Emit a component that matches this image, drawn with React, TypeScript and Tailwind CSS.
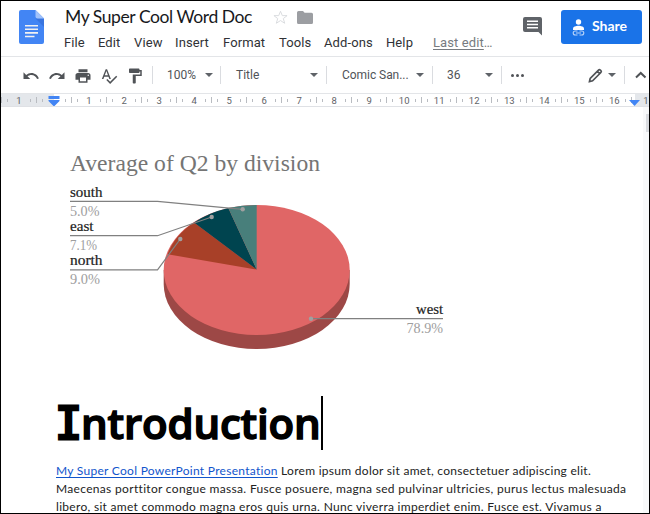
import React from "react";

const menus = ["File", "Edit", "View", "Insert", "Format", "Tools", "Add-ons", "Help"];
const menuWidths = ["w-[34px]", "w-[36px]", "w-[41px]", "w-[48px]", "w-[56px]", "w-[45px]", "w-[62px]", "w-[47px]"];
const ruler = ["1", "", "1", "2", "3", "4", "5", "6", "7", "8", "9", "10", "11", "12", "13", "14", "15", "16"];

function Caret() {
  return <svg width="8" height="4" viewBox="0 0 8 4" className="shrink-0"><path d="M0 0h8L4 4z" fill="#5f6368" /></svg>;
}

function Divider() {
  return <div className="h-[18px] w-px shrink-0 bg-[#dadce0]" />;
}

function Material({ d, size = 18 }: { d: string; size?: number }) {
  return <svg width={size} height={size} viewBox="0 0 24 24" className="shrink-0" fill="#505357"><path d={d} /></svg>;
}

function Header() {
  return (
    <header className="flex h-[56px] shrink-0 border-b border-[#e3e5e8]">
      <svg width="25" height="34" viewBox="0 0 25 34" className="ml-[18px] mt-[9px] shrink-0">
        <path d="M2 0h14.500l8.500 8.500V32a2 2 0 0 1-2 2H2a2 2 0 0 1-2-2V2a2 2 0 0 1 2-2z" fill="#4285f4" />
        <path d="M16.500 8.500H25V17z" fill="#3975df" />
        <path d="M16.500 0L25 8.500h-6.500a2 2 0 0 1-2-2z" fill="#a1c2fa" />
        <path d="M6 15.700h13M6 19.300h13M6 22.900h13M6 26.500h9.500" stroke="#f1f1f1" strokeWidth="1.600" />
      </svg>
      <div className="ml-[20px] flex-1 pt-[4px]">
        <div className="flex h-[24px] items-center">
          <span className="w-[209px] whitespace-nowrap pl-[1px] font-['Lato'] text-[17.500px] leading-[24px] tracking-[-0.420px] text-[#17191c]">My Super Cool Word Doc</span>
          <svg width="15" height="15" viewBox="0 0 24 24" className="shrink-0"><path d="M12 2l2.900 7h7.600l-6 4.700 2.200 7.500L12 16.900l-6.700 4.300 2.200-7.500L1.500 9h7.600z" fill="none" stroke="#d8dadd" strokeWidth="1.500" /></svg>
          <svg width="16" height="13" viewBox="0 0 16 13" className="ml-[9px] shrink-0"><path d="M1.500 0H6l1.600 1.700h6.900A1.500 1.500 0 0 1 16 3.200v8.300a1.500 1.500 0 0 1-1.500 1.500h-13A1.500 1.500 0 0 1 0 11.500v-10A1.500 1.500 0 0 1 1.500 0z" fill="#9c9ea2" /></svg>
        </div>
        <nav className="flex h-[28px] items-center text-[13px] tracking-[0.100px] text-[#303236]">
          {menus.map((m, i) => <span key={m} className={`${menuWidths[i]} shrink-0 whitespace-nowrap`}>{m}</span>)}
          <span className="whitespace-nowrap text-[#777b80]"><span className="underline underline-offset-2">Last edit</span>…</span>
        </nav>
      </div>
      <svg width="19" height="19" viewBox="0 0 19 19" className="mt-[16px] shrink-0"><path d="M2 0h15a2 2 0 0 1 2 2v16.500L15.500 15H2a2 2 0 0 1-2-2V2a2 2 0 0 1 2-2z" fill="#5f6368" /><path d="M4 4.300h11M4 7.500h11M4 10.700h11" stroke="white" strokeWidth="1.600" /></svg>
      <button className="ml-[19px] mr-[7px] mt-[9px] flex h-[34px] w-[81px] shrink-0 items-center rounded-[3px] bg-[#1a73e8] pl-[11px] text-white">
        <svg width="13" height="17" viewBox="0 0 13 17">
          <circle cx="6.500" cy="3" r="2.700" fill="white" />
          <path d="M1 11V9.600C1 7.700 4 6.800 6.500 6.800S12 7.700 12 9.600V11z" fill="white" />
          <path d="M5.500 12H3.200a2 2 0 0 0 0 4h2.300M7.500 12h2.300a2 2 0 0 1 0 4H7.500M4 14h5" fill="none" stroke="#b9d4f8" strokeWidth="1.100" />
        </svg>
        <span className="-mt-[2px] ml-[7px] font-['Lato'] text-[14px] font-bold leading-none">Share</span>
      </button>
    </header>
  );
}

function Toolbar() {
  return (
    <div className="flex h-[37px] shrink-0 items-center border-b border-[#e3e5e8] text-[12px] text-[#505357]">
      <div className="ml-[21px] flex w-[130px] shrink-0 items-center gap-[8px] pt-px">
        <Material d="M12.500 8c-2.650 0-5.050.99-6.900 2.600L2 7v9h9l-3.620-3.620c1.390-1.160 3.160-1.880 5.120-1.880 3.540 0 6.550 2.310 7.600 5.500l2.370-.78C21.080 11.030 17.150 8 12.500 8z" />
        <Material d="M18.400 10.600C16.550 8.990 14.150 8 11.500 8c-4.650 0-8.580 3.030-9.960 7.220L3.900 16c1.050-3.190 4.050-5.500 7.600-5.500 1.950 0 3.730.72 5.120 1.880L13 16h9V7z" />
        <Material d="M19 8H5c-1.660 0-3 1.340-3 3v6h4v4h12v-4h4v-6c0-1.660-1.340-3-3-3zm-3 11H8v-5h8v5zm3-7c-.55 0-1-.45-1-1s.45-1 1-1 1 .45 1 1-.45 1-1 1zm-1-9H6v4h12V3z" />
        <Material d="M12.450 16h2.090L9.430 3H7.570L2.460 16h2.090l1.120-3h5.640l1.140 3zm-6.020-5L8.500 5.480 10.570 11H6.430zm15.160.59l-8.090 8.090L9.830 16l-1.410 1.410 5.090 5.090L23 13l-1.410-1.410z" />
        <Material d="M18 4V3c0-.55-.45-1-1-1H5c-.55 0-1 .45-1 1v4c0 .55.45 1 1 1h12c.55 0 1-.45 1-1V6h1v4H9v11c0 .55.45 1 1 1h2c.55 0 1-.45 1-1v-9h8V4h-3z" />
      </div>
      <Divider />
      <div className="flex w-[67px] shrink-0 items-center justify-between pl-[14px] pr-[7px]"><span>100%</span><Caret /></div>
      <Divider />
      <div className="flex w-[105px] shrink-0 items-center justify-between pl-[15px] pr-[8px]"><span>Title</span><Caret /></div>
      <Divider />
      <div className="flex w-[105px] shrink-0 items-center justify-between whitespace-nowrap pl-[15px] pr-[8px]"><span className="tracking-[-0.050px]">Comic San...</span><Caret /></div>
      <Divider />
      <div className="flex w-[68px] shrink-0 items-center justify-between pl-[14px] pr-[8px]"><span>36</span><Caret /></div>
      <Divider />
      <svg width="13" height="3" viewBox="0 0 13 3" className="ml-[9px] shrink-0" fill="#505357"><circle cx="1.500" cy="1.500" r="1.500" /><circle cx="6.500" cy="1.500" r="1.500" /><circle cx="11.500" cy="1.500" r="1.500" /></svg>
      <div className="ml-auto flex w-[36px] shrink-0 items-center">
        <svg width="15" height="15" viewBox="0 0 15 15"><path d="M1.500 13.500l.7-3.100 8.300-8.300a1.300 1.300 0 0 1 1.800 0l.6.600a1.300 1.300 0 0 1 0 1.800l-8.300 8.300zM9.300 3.300l2.400 2.400" fill="none" stroke="#505357" strokeWidth="1.700" /></svg>
        <span className="ml-[5px]"><Caret /></span>
      </div>
      <Divider />
      <svg width="24" height="12" viewBox="0 0 24 12" className="shrink-0"><path d="M11 8.500l4.750-4.500L20.500 8.500" fill="none" stroke="#505357" strokeWidth="2" /></svg>
    </div>
  );
}

function Ruler() {
  return (
    <div className="relative flex h-[13px] shrink-0 overflow-hidden border-b border-[#dfe1e5]">
      <div className="absolute inset-y-0 left-0 w-[53px] bg-[#e4e7eb]" />
      <div className="absolute inset-y-0 right-0 w-[14px] bg-[#e4e7eb]" />
      {ruler.map((n, i) => (
        <div key={i} className="relative flex w-[35.030px] shrink-0 items-center justify-between text-[9.500px] text-[#5f6368]">
          <i className="h-[6px] w-px bg-[#b9bcc1]" />
          <i className="h-[3px] w-px bg-[#b9bcc1]" />
          <span className="w-[12px] pt-px text-center leading-[12px]">{n}</span>
          <i className="h-[3px] w-px bg-[#b9bcc1]" />
          <i className="w-0" />
        </div>
      ))}
      <div className="relative flex shrink-0 items-center text-[9.500px] leading-[12px] text-[#5f6368]">
        <i className="h-[6px] w-px bg-[#b9bcc1]" />
        <span className="ml-[11px] pt-px">1</span>
      </div>
      <svg width="12" height="11" viewBox="0 0 12 11" className="absolute left-[47px] top-[2px]"><path d="M.5 0h11v3H.5zM.5 4h11v1L6 10.500.5 5z" fill="#4285f4" /></svg>
      <svg width="11" height="6" viewBox="0 0 11 6" className="absolute left-[628px] top-[6px]"><path d="M0 0h11L5.500 6z" fill="#4285f4" /></svg>
    </div>
  );
}

function Leader({ x, y, name, value, nameWidth, valueWidth, end }: { x: number; y: number; name: string; value: string; nameWidth: number; valueWidth: number; end?: boolean }) {
  return (
    <>
      <text x={end ? x - nameWidth : x} y={y - 5} textLength={nameWidth} lengthAdjust="spacingAndGlyphs" fill="#222" stroke="#222" strokeWidth=".2">{name}</text>
      <text x={end ? x - valueWidth : x} y={y + 14} textLength={valueWidth} lengthAdjust="spacingAndGlyphs" fill="#9e9e9e">{value}</text>
    </>
  );
}

function PieChart() {
  return (
    <svg width="400" height="220" viewBox="56 140 400 220" className="ml-[55px] shrink-0 font-['Liberation_Serif',serif] text-[14px]">
      <text x="70" y="171" fontSize="23" textLength="250" lengthAdjust="spacingAndGlyphs" fill="#757575">Average of Q2 by division</text>
      <path d="M163.700 270v14a93 65 0 0 0 186 0v-14z" fill="#9d4846" />
      <ellipse cx="256.700" cy="270" rx="93" ry="65" fill="#e06666" />
      <path d="M256.700 269.500L167.600 254.300A93 65 0 0 1 194 222.500z" fill="#a84028" />
      <path d="M256.700 269.500L194 222.500A93 65 0 0 1 228.300 208z" fill="#00444f" />
      <path d="M256.700 269.500L228.300 208A93 65 0 0 1 256.700 205z" fill="#487f7b" />
      <g fill="none" stroke="#808080" strokeWidth="1.200">
        <path d="M70 201.300H157.500L242.700 209.300" />
        <path d="M70 235.700H157.500L211.700 217" />
        <path d="M70 269.800H157.500L180.300 239" />
        <path d="M311 318.700H443" />
      </g>
      <g fill="#a0a0a0"><circle cx="242.700" cy="209.300" r="2.200" /><circle cx="211.700" cy="217" r="2.200" /><circle cx="180.300" cy="239" r="2.200" /><circle cx="311" cy="318.700" r="2.200" /></g>
      <Leader x={70} y={201.500} name="south" value="5.0%" nameWidth={32.500} valueWidth={29.500} />
      <Leader x={70} y={236} name="east" value="7.1%" nameWidth={23.500} valueWidth={27} />
      <Leader x={70} y={270} name="north" value="9.0%" nameWidth={32.500} valueWidth={30} />
      <Leader end x={443} y={319} name="west" value="78.9%" nameWidth={27} valueWidth={36.500} />
    </svg>
  );
}

export default function App() {
  return (
    <div className="flex h-[514px] w-[650px] flex-col overflow-hidden border border-black bg-white font-['Roboto',sans-serif]">
      <Header />
      <Toolbar />
      <Ruler />
      <main className="relative flex flex-1 flex-col overflow-hidden pt-[33px]">
        <div className="absolute inset-y-0 right-0 w-[6px] bg-[#f8f9fa]" />
        <div className="absolute right-0 top-[7px] h-[18px] w-[3px] bg-[#dadce0]" />
        <PieChart />
        <div className="ml-[54px] mt-[35px] flex h-[55px] shrink-0 items-center text-black">
          <h1 className="flex w-[266px] shrink-0 items-baseline whitespace-nowrap font-semibold leading-[55px] [-webkit-text-stroke:1.500px_black] [stroke-linejoin:round]">
            <span className="-mr-[1px] font-['DejaVu_Sans_Mono'] text-[45px] font-normal [-webkit-text-stroke:3px_black]">I</span>
            <span className="font-['Open_Sans'] text-[42px] tracking-[-0.180px]">ntroduction</span>
          </h1>
          <div className="h-[54px] w-[2px] bg-black" />
        </div>
        <div className="ml-[55px] mt-[12px] shrink-0 whitespace-nowrap font-['Lato'] text-[12px] leading-[18px] tracking-[0.320px] text-[#222]">
          <p className="tracking-[0.280px]"><span className="text-[#1155cc] underline underline-offset-2">My Super Cool PowerPoint Presentation</span> Lorem ipsum dolor sit amet, consectetuer adipiscing elit.</p>
          <p>Maecenas porttitor congue massa. Fusce posuere, magna sed pulvinar ultricies, purus lectus malesuada</p>
          <p className="tracking-[0.300px]">libero, sit amet commodo magna eros quis urna. Nunc viverra imperdiet enim. Fusce est. Vivamus a</p>
        </div>
      </main>
    </div>
  );
}
